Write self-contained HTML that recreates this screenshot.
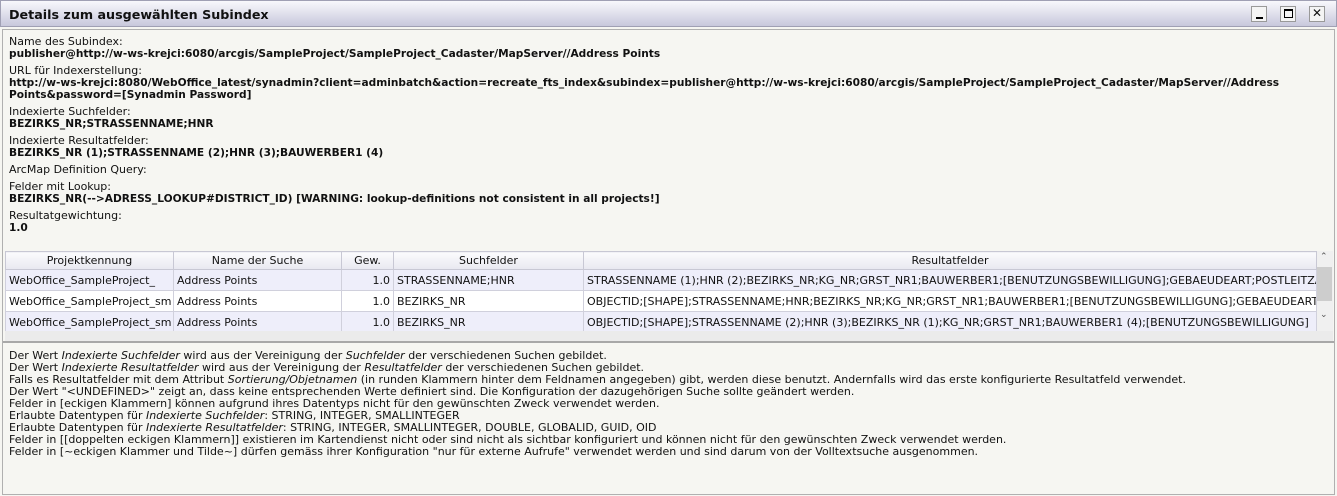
<!DOCTYPE html>
<html><head><meta charset="utf-8">
<style>
*{margin:0;padding:0;box-sizing:border-box}
body{width:1337px;height:496px;background:#f6f6f2;font-family:"DejaVu Sans","Liberation Sans",sans-serif;font-size:11px;color:#111;position:relative;overflow:hidden}
.title{position:absolute;left:0;top:0;width:1337px;height:27px;background:linear-gradient(#f8f8fc,#c8c8dc);border:1px solid #a0a0b4;}
.title span{position:absolute;left:8px;top:6px;font-weight:bold;font-size:12.7px;color:#111}
.btn{position:absolute;top:5px;width:16px;height:16px;border:1px solid #999;background:#f4f4f4}
.main{position:absolute;left:2px;top:29px;width:1333px;height:466px;border:1px solid #b0b0b0;background:#f6f6f2}
.info{position:absolute;left:6px;top:6px;line-height:12px}
.info .g{margin-bottom:5px}
.info b{font-weight:bold;font-size:10.6px}
table{position:absolute;left:2px;top:221px;border-collapse:collapse;table-layout:fixed;width:1312px;font-size:11px}
th{height:18px;font-weight:normal;background:linear-gradient(#fbfbfd,#e8e8f0);border:1px solid #c8c8d4;text-align:center}
td{height:21px;border:1px solid #d0d0dc;padding:0 3px;white-space:nowrap;overflow:hidden}
tr.a td{background:#eeeefa}
tr.b td{background:#fff}
.r{text-align:right}
.sb{position:absolute;left:1314px;top:221px;width:16px;height:80px;background:#f0f0f0}
.thumb{position:absolute;left:1314px;top:237px;width:15px;height:34px;background:#cdcdcd}
.gray{position:absolute;left:2px;top:301px;width:1328px;height:10px;background:#ebebeb}
.div{position:absolute;left:0;top:311px;width:1331px;height:2px;background:#a8a8a8}
.bottom{position:absolute;left:6px;top:320px;line-height:12px}
</style></head><body>
<div class="title"><span>Details zum ausgewählten Subindex</span>
<div class="btn" style="left:1250px"><div style="position:absolute;left:4px;top:10px;width:7px;height:2px;background:#000"></div></div>
<div class="btn" style="left:1279px"><div style="position:absolute;left:3px;top:2px;width:9px;height:9px;border:1px solid #000;border-top-width:2px"></div></div>
<div class="btn" style="left:1308px;font-size:12px;line-height:13px;text-align:center">✕</div>
</div>
<div class="main">
<div class="info">
<div class="g">Name des Subindex:<br><b>publisher@http://w-ws-krejci:6080/arcgis/SampleProject/SampleProject_Cadaster/MapServer//Address Points</b></div>
<div class="g">URL für Indexerstellung:<br><b>http://w-ws-krejci:8080/WebOffice_latest/synadmin?client=adminbatch&amp;action=recreate_fts_index&amp;subindex=publisher@http://w-ws-krejci:6080/arcgis/SampleProject/SampleProject_Cadaster/MapServer//Address<br>Points&amp;password=[Synadmin Password]</b></div>
<div class="g">Indexierte Suchfelder:<br><b>BEZIRKS_NR;STRASSENNAME;HNR</b></div>
<div class="g">Indexierte Resultatfelder:<br><b>BEZIRKS_NR (1);STRASSENNAME (2);HNR (3);BAUWERBER1 (4)</b></div>
<div class="g">ArcMap Definition Query:</div>
<div class="g">Felder mit Lookup:<br><b>BEZIRKS_NR(--&gt;ADRESS_LOOKUP#DISTRICT_ID) [WARNING: lookup-definitions not consistent in all projects!]</b></div>
<div class="g">Resultatgewichtung:<br><b>1.0</b></div>
</div>
<table>
<colgroup><col style="width:168px"><col style="width:168px"><col style="width:52px"><col style="width:190px"><col></colgroup>
<tr><th>Projektkennung</th><th>Name der Suche</th><th>Gew.</th><th>Suchfelder</th><th>Resultatfelder</th></tr>
<tr class="a"><td>WebOffice_SampleProject_</td><td>Address Points</td><td class="r">1.0</td><td>STRASSENNAME;HNR</td><td>STRASSENNAME (1);HNR (2);BEZIRKS_NR;KG_NR;GRST_NR1;BAUWERBER1;[BENUTZUNGSBEWILLIGUNG];GEBAEUDEART;POSTLEITZAHL</td></tr>
<tr class="b"><td>WebOffice_SampleProject_sm</td><td>Address Points</td><td class="r">1.0</td><td>BEZIRKS_NR</td><td>OBJECTID;[SHAPE];STRASSENNAME;HNR;BEZIRKS_NR;KG_NR;GRST_NR1;BAUWERBER1;[BENUTZUNGSBEWILLIGUNG];GEBAEUDEART</td></tr>
<tr class="a"><td>WebOffice_SampleProject_sm</td><td>Address Points</td><td class="r">1.0</td><td>BEZIRKS_NR</td><td>OBJECTID;[SHAPE];STRASSENNAME (2);HNR (3);BEZIRKS_NR (1);KG_NR;GRST_NR1;BAUWERBER1 (4);[BENUTZUNGSBEWILLIGUNG]</td></tr>
</table>
<div class="sb"></div><div class="thumb"></div>
<div style="position:absolute;left:1317px;top:222px;font-size:9px;color:#555">⌃</div>
<div style="position:absolute;left:1317px;top:280px;font-size:9px;color:#555">⌄</div>
<div class="gray"></div>
<div class="div"></div>
<div class="bottom">
Der Wert <i>Indexierte Suchfelder</i> wird aus der Vereinigung der <i>Suchfelder</i> der verschiedenen Suchen gebildet.<br>
Der Wert <i>Indexierte Resultatfelder</i> wird aus der Vereinigung der <i>Resultatfelder</i> der verschiedenen Suchen gebildet.<br>
Falls es Resultatfelder mit dem Attribut <i>Sortierung/Objetnamen</i> (in runden Klammern hinter dem Feldnamen angegeben) gibt, werden diese benutzt. Andernfalls wird das erste konfigurierte Resultatfeld verwendet.<br>
Der Wert "&lt;UNDEFINED&gt;" zeigt an, dass keine entsprechenden Werte definiert sind. Die Konfiguration der dazugehörigen Suche sollte geändert werden.<br>
Felder in [eckigen Klammern] können aufgrund ihres Datentyps nicht für den gewünschten Zweck verwendet werden.<br>
Erlaubte Datentypen für <i>Indexierte Suchfelder</i>: STRING, INTEGER, SMALLINTEGER<br>
Erlaubte Datentypen für <i>Indexierte Resultatfelder</i>: STRING, INTEGER, SMALLINTEGER, DOUBLE, GLOBALID, GUID, OID<br>
Felder in [[doppelten eckigen Klammern]] existieren im Kartendienst nicht oder sind nicht als sichtbar konfiguriert und können nicht für den gewünschten Zweck verwendet werden.<br>
Felder in [~eckigen Klammer und Tilde~] dürfen gemäss ihrer Konfiguration "nur für externe Aufrufe" verwendet werden und sind darum von der Volltextsuche ausgenommen.
</div>
</div>
</body></html>
